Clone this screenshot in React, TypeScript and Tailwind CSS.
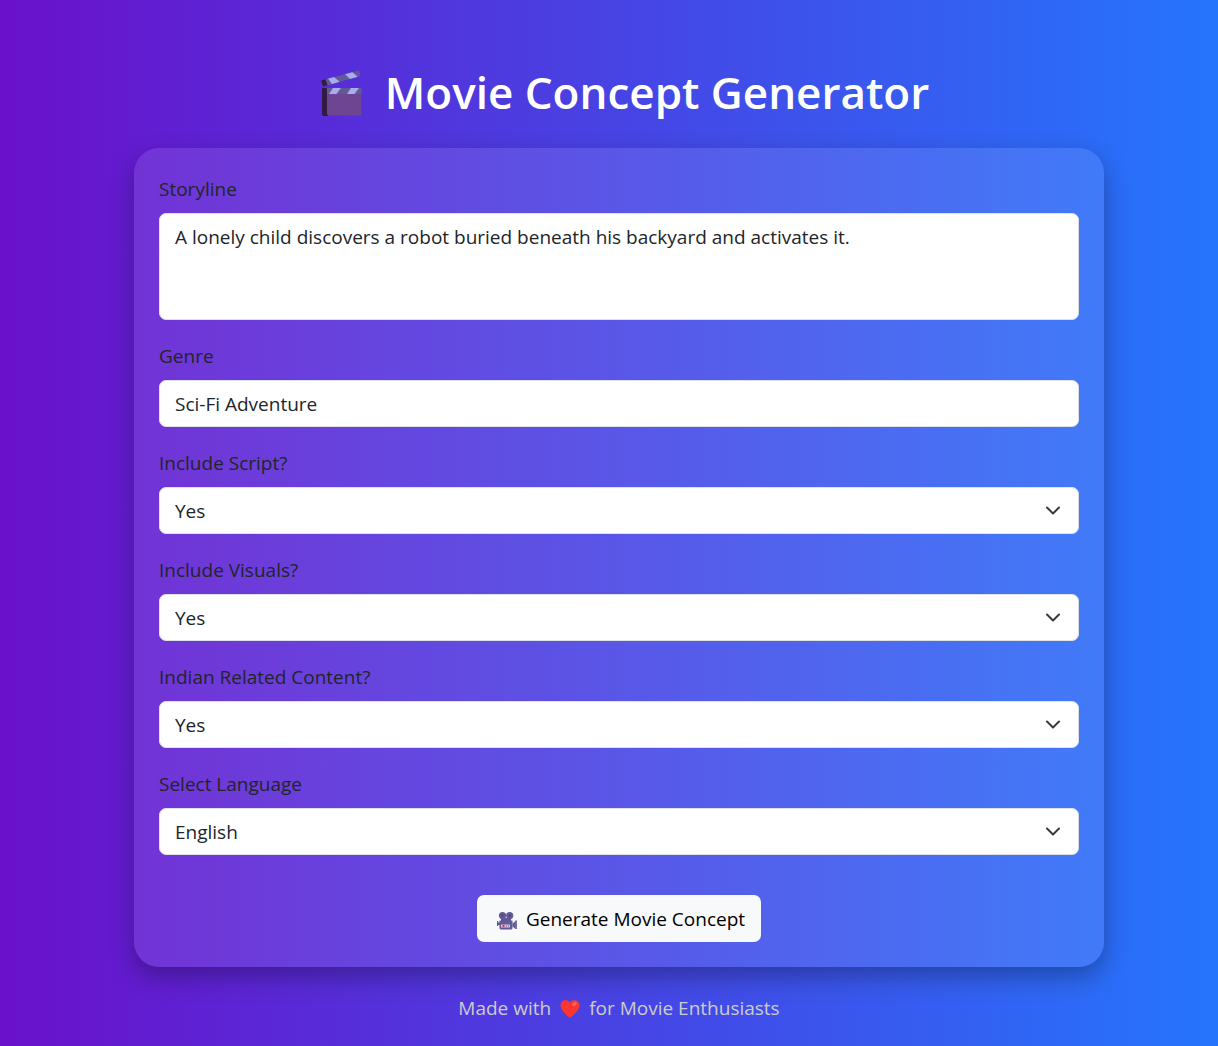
import { useId } from 'react';
import type { ReactNode } from 'react';

const control =
  'block w-full rounded-[7px] border border-[#dee2e6] bg-white px-[15px] text-[19px] leading-[30px] text-[#212529] outline-none';

function Clapper() {
  return (
    <svg viewBox="0 0 42 47" className="mt-0.5 h-[47px] w-[42px] shrink-0" aria-hidden="true">
      <defs>
        <clipPath id="arm">
          <path d="M0 10.500 38 .5l1.500 5.500L2 16.500Z" />
        </clipPath>
      </defs>
      <path d="M0 10.500 38 .5l1.500 5.500L2 16.500Z" fill="#635994" />
      <g clipPath="url(#arm)" fill="#a6aeee">
        <path d="M6 7l6-1 9 8-8 3Z" />
        <path d="M23 3l7-2 8 7-7 3Z" />
      </g>
      <path d="M0 10.500 4.500 9.300 6.500 15.300 2 16.500Z" fill="#321b41" />
      <path d="M1 18h6v28H3q-2 0-2-2Z" fill="#321b41" />
      <path d="M6 18h34.500v26q0 1.500-1.500 1.500H8q-2 0-2-2Z" fill="#6d4590" />
      <path d="M6 18h34.500v6H6Z" fill="#635994" />
      <g fill="#a6aeee">
        <path d="M12 18h8l-4.500 6H8Z" />
        <path d="M30 18h8l-4.500 6H26Z" />
      </g>
    </svg>
  );
}

function Camera() {
  return (
    <svg viewBox="0 0 20 18" className="mt-1 h-[18px] w-5 shrink-0" aria-hidden="true">
      <g fill="#635994">
        <circle cx="5.500" cy="3.600" r="3.600" />
        <circle cx="12.700" cy="3.600" r="3.600" />
        <path d="M4 6h10v4H4Z" />
        <path d="M2.500 8.500h13v7.500q0 1.500-1.500 1.500H4q-1.500 0-1.500-1.500Z" />
        <path d="M0 9h1.200v1.500H3V13H1.200v1H0Z" />
        <path d="M15.500 11.500 18.500 9v8l-3-2.500Z" />
      </g>
      <path d="M18 8.500h2V17h-2Z" fill="#776ca5" />
      <circle cx="5.500" cy="3.500" r=".9" fill="#4b4078" />
      <circle cx="12.700" cy="3.500" r=".9" fill="#4b4078" />
      <rect x="4" y="12.500" width="9" height="3" rx=".6" fill="#cfc9e0" />
      <circle cx="6.500" cy="14" r="1.200" fill="#e8364f" />
      <path d="M9 13h1v2H9Zm2 0h1v2h-1Z" fill="#9a8fc0" />
    </svg>
  );
}

function Heart() {
  return (
    <svg viewBox="0 0 20 18" className="mt-0.5 h-[18px] w-5 shrink-0" aria-hidden="true">
      <path
        d="M10 2.600C8.700.8 7 .2 5.300.2 2.500.2.500 2.500.500 5.300c0 4.700 5.500 9.400 8.700 12q.8.600 1.600 0c3.200-2.600 8.700-7.300 8.700-12 0-2.800-2-5.100-4.800-5.100C13 .2 11.300.8 10 2.600Z"
        fill="#fb3630"
      />
      <ellipse cx="14.500" cy="4" rx="2.600" ry="1.700" transform="rotate(-35 14.500 4)" fill="#ff6456" />
    </svg>
  );
}

function Field({ label, children }: { label: string; children: (id: string) => ReactNode }) {
  const id = useId();
  return (
    <div className="mb-5">
      <label htmlFor={id} className="mb-2 block w-fit leading-8">
        {label}
      </label>
      {children(id)}
    </div>
  );
}

function SelectField({ label, options }: { label: string; options: string[] }) {
  return (
    <Field label={label}>
      {(id) => (
        <div className="relative">
          <select id={id} className={`${control} h-[47px] appearance-none pr-12`}>
            {options.map((o) => (
              <option key={o}>{o}</option>
            ))}
          </select>
          <svg
            viewBox="0 0 16 16"
            className="pointer-events-none absolute top-[15px] right-[18px] size-4"
            fill="none"
            stroke="#343a40"
            strokeWidth="2"
            strokeLinecap="round"
            strokeLinejoin="round"
            aria-hidden="true"
          >
            <path d="m2 5.500 6 6 6-6" />
          </svg>
        </div>
      )}
    </Field>
  );
}

export default function App() {
  return (
    <div className="min-h-screen bg-linear-to-r/srgb from-[#6a11cb] to-[#2575fc] pt-[62px] pr-4 pb-[23px] pl-9 font-['Open_Sans','Noto_Sans',sans-serif] text-[19px] leading-[30px] text-[#212529]">
      <main className="mx-auto w-full max-w-[970px]">
        <h1 className="mb-[26px] flex items-center justify-center gap-[22px] pl-3 text-[44px] leading-[60px] font-semibold text-white">
          <Clapper />
          Movie Concept Generator
        </h1>
        <form
          className="rounded-[25px] bg-white/10 p-[25px] shadow-[0_10px_25px_rgba(0,0,0,0.3)]"
          onSubmit={(e) => e.preventDefault()}
        >
          <Field label="Storyline">
            {(id) => (
              <textarea
                id={id}
                className={`${control} h-[107px] resize-none py-2`}
                defaultValue="A lonely child discovers a robot buried beneath his backyard and activates it."
              />
            )}
          </Field>
          <Field label="Genre">
            {(id) => <input id={id} type="text" className={`${control} h-[47px]`} defaultValue="Sci-Fi Adventure" />}
          </Field>
          <SelectField label="Include Script?" options={['Yes', 'No']} />
          <SelectField label="Include Visuals?" options={['Yes', 'No']} />
          <SelectField label="Indian Related Content?" options={['Yes', 'No']} />
          <SelectField label="Select Language" options={['English', 'Hindi']} />
          <div className="flex justify-center pt-5">
            <button
              type="submit"
              className="flex h-[47px] items-center gap-[9px] rounded-[7px] bg-[#f8f9fa] pr-4 pl-5 text-black"
            >
              <Camera />
              Generate Movie Concept
            </button>
          </div>
        </form>
        <footer className="mt-[26px] flex items-center justify-center gap-[9px] text-[#cccccc]">
          Made with
          <Heart />
          for Movie Enthusiasts
        </footer>
      </main>
    </div>
  );
}
